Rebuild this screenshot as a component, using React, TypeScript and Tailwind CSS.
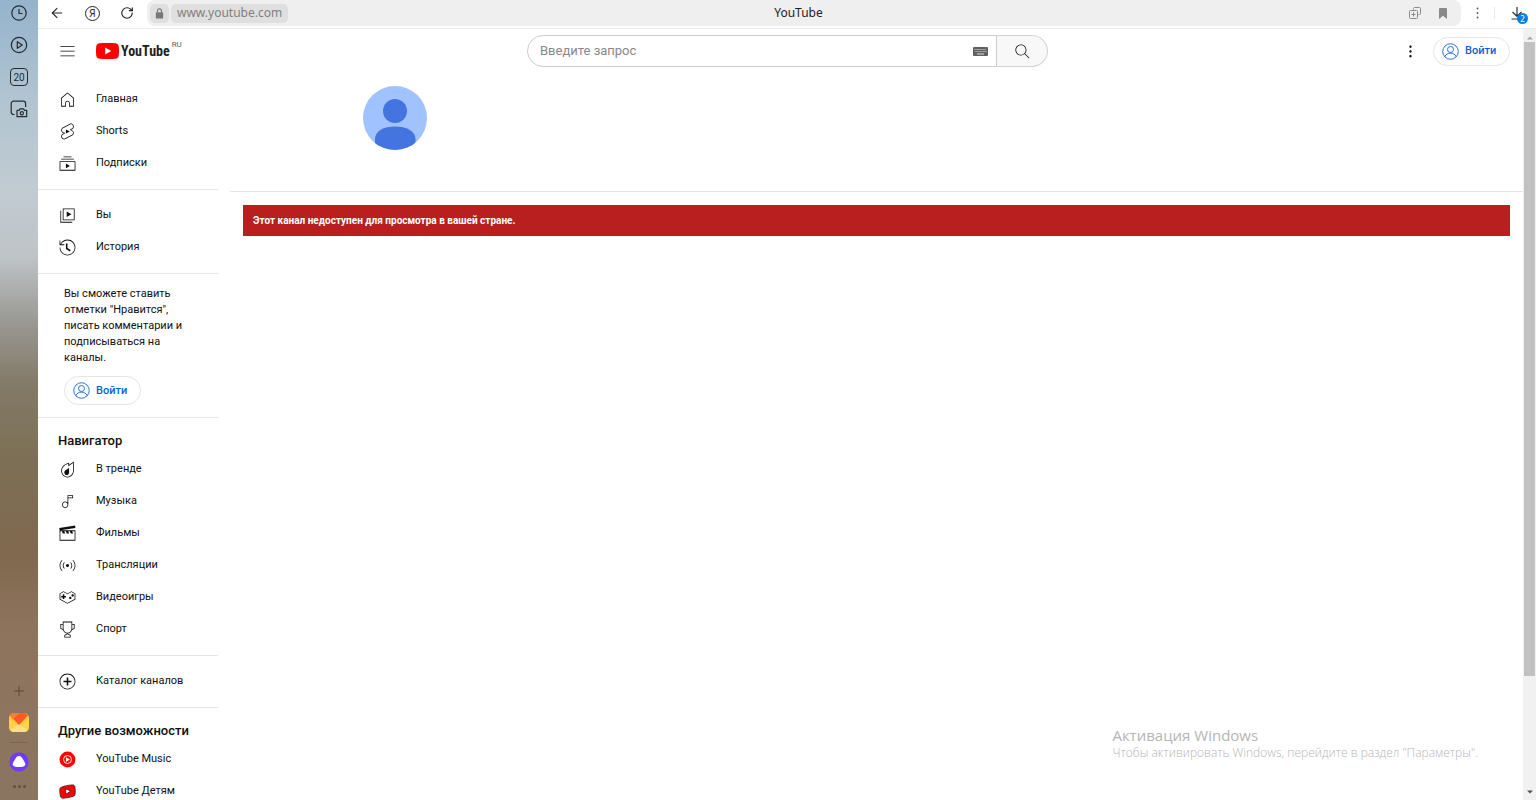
import type { ReactNode } from "react";
import { ArrowLeft, Plus, RotateCw } from "lucide-react";

const paths = {
  menu: "M21 6H3V5h18v1zm0 5H3v1h18v-1zm0 6H3v1h18v-1z",
  search:
    "m20.87 20.17-5.59-5.59C16.35 13.35 17 11.75 17 10c0-3.87-3.13-7-7-7s-7 3.13-7 7 3.13 7 7 7c1.75 0 3.35-.65 4.58-1.71l5.59 5.59.7-.71zM10 16c-3.31 0-6-2.69-6-6s2.69-6 6-6 6 2.69 6 6-2.69 6-6 6z",
  dots: "M12 16.5c.83 0 1.5.67 1.5 1.5s-.67 1.5-1.5 1.5-1.5-.67-1.5-1.5.67-1.5 1.5-1.5zM10.5 12c0 .83.67 1.5 1.5 1.5s1.5-.67 1.5-1.5-.67-1.5-1.5-1.5-1.5.67-1.5 1.5zm0-6c0 .83.67 1.5 1.5 1.5s1.5-.67 1.5-1.5-.67-1.5-1.5-1.5-1.5.67-1.5 1.5z",
  home: "m12 4.3-7 6V20h4v-3.5c0-1.65 1.35-3 3-3s3 1.35 3 3V20h4v-9.7l-7-6M12 3l8 6.8V21h-6v-4.5c0-1.1-.9-2-2-2s-2 .9-2 2V21H4V9.8L12 3z",
  shorts:
    "M10 14.65v-5.3L15 12l-5 2.65zm7.77-4.33-1.2-.5L18 9.06c1.84-.96 2.53-3.23 1.56-5.06s-3.24-2.53-5.07-1.56L6 6.94c-1.29.68-2.07 2.04-2 3.49.07 1.42.93 2.67 2.22 3.25.03.01 1.2.5 1.2.5L6 14.93c-1.83.97-2.53 3.24-1.56 5.07.97 1.83 3.24 2.53 5.07 1.56l8.5-4.5c1.29-.68 2.06-2.04 1.99-3.49-.07-1.42-.94-2.68-2.23-3.25zm-.23 5.86-8.5 4.5c-1.34.71-3.01.2-3.72-1.14-.71-1.34-.2-3.01 1.14-3.72l2.04-1.08v-1.21l-.69-.28-1.11-.46c-.99-.41-1.65-1.35-1.7-2.41-.05-1.06.52-2.06 1.46-2.56l8.5-4.5c1.34-.71 3.01-.2 3.72 1.14.71 1.34.2 3.01-1.14 3.72L15.5 9.26v1.21l1.8.74c.99.41 1.65 1.35 1.7 2.41.05 1.06-.52 2.06-1.46 2.56z",
  subs: "M10 18v-6l5 3-5 3zm7-15H7v1h10V3zm3 3H4v1h16V6zm2 3H2v12h20V9zM3 10h18v10H3V10z",
  you: "m11 7 6 3.5-6 3.5V7zm7 13H4V6H3v15h15v-1zm3-2H6V3h15v15zM7 17h13V4H7v13z",
  history:
    "M14.97 16.95 10 13.87V7h2v5.76l4.03 2.49-1.06 1.7zM22 12c0 5.51-4.49 10-10 10S2 17.51 2 12h1c0 4.96 4.04 9 9 9s9-4.04 9-9-4.04-9-9-9C8.81 3 5.92 4.64 4.28 7.38c-.11.18-.22.37-.31.56L3.94 8H8v1H1.96V3h1v4.74c.04-.09.07-.17.11-.25.11-.22.23-.42.35-.63C5.22 3.86 8.51 2 12 2c5.51 0 10 4.49 10 10z",
  trending:
    "M19 3.87v9.77C19 17.7 15.86 21 12 21s-7-3.3-7-7.37v-.13c0-1.06.22-2.13.62-3.09.5-1.19 1.29-2.21 2.27-2.97.85-.66 1.83-1.14 2.87-1.65.39-.19.77-.38 1.15-.58.36-.19.72-.38 1.08-.56v3.22l1.55-1.04L19 3.87M20 2l-6 4V3c-.85.44-1.7.88-2.55 1.33-1.41.74-2.9 1.34-4.17 2.32-1.13.87-2.02 2.05-2.58 3.37-.46 1.09-.7 2.29-.7 3.48v.14C4 18.26 7.58 22 12 22s8-3.74 8-8.36V2zM9.45 12.89 14 10v5.7c0 1.82-1.34 3.3-3 3.3s-3-1.47-3-3.3c0-1.19.58-2.23 1.45-2.81z",
  music:
    "M12 4v9.38c-.73-.84-1.8-1.38-3-1.38-2.21 0-4 1.79-4 4s1.79 4 4 4 4-1.79 4-4V8h6V4h-7zM9 19c-1.66 0-3-1.34-3-3s1.34-3 3-3 3 1.34 3 3-1.34 3-3 3zm9-12h-5V5h5v2z",
  movies:
    "m22.01 4.91-.5-2.96L1.64 5.19 2 8v13h20V8H3.06l18.95-3.09zM5 9l1 3h3L8 9h2l1 3h3l-1-3h2l1 3h3l-1-3h3v11H3V9h2z",
  live: "M14 12c0 1.1-.9 2-2 2s-2-.9-2-2 .9-2 2-2 2 .9 2 2zM8.48 8.45l-.71-.7C6.68 8.83 6 10.34 6 12s.68 3.17 1.77 4.25l.71-.71C7.57 14.64 7 13.39 7 12s.57-2.64 1.48-3.55zm7.75-.7-.71.71c.91.9 1.48 2.15 1.48 3.54s-.57 2.64-1.48 3.55l.71.71C17.32 15.17 18 13.66 18 12s-.68-3.17-1.77-4.25zM5.65 5.63l-.7-.71C3.13 6.73 2 9.24 2 12s1.13 5.27 2.95 7.08l.71-.71C4.02 16.74 3 14.49 3 12s1.02-4.74 2.65-6.37zm13.4-.71-.71.71C19.98 7.26 21 9.51 21 12s-1.02 4.74-2.65 6.37l.71.71C20.87 17.27 22 14.76 22 12s-1.13-5.27-2.95-7.08z",
  gaming:
    "M10 12H8v2H6v-2H4v-2h2V8h2v2h2v2zm7 .5c0-.83-.67-1.5-1.5-1.5s-1.5.67-1.5 1.5.67 1.5 1.5 1.5 1.5-.67 1.5-1.5zm3-3c0-.83-.67-1.5-1.5-1.5S17 8.67 17 9.5s.67 1.5 1.5 1.5 1.5-.67 1.5-1.5zm-3.03-4.35-4.5 2.53-.49.27-.49-.27-4.5-2.53L3 7.39v6.43l8.98 5.04 8.98-5.04V7.39l-3.99-2.24m0-1.15 4.99 2.8v7.6L11.98 20 2 14.4V6.8L6.99 4l4.99 2.8L16.97 4z",
  sports:
    "M18 5V2H6v3H3v6l3.23 1.61c.7 2.5 2.97 4.34 5.69 4.38L8 19v3h8v-3l-3.92-2.01c2.72-.04 4.99-1.88 5.69-4.38L21 11V5h-3zM6 11.38l-2-1V6h2v5.38zM15 21H9v-1.39l3-1.54 3 1.54V21zm2-10c0 2.76-2.24 5-5 5s-5-2.24-5-5V3h10v8zm3-.62-2 1V6h2v4.38z",
  channels:
    "M17 13h-4v4h-2v-4H7v-2h4V7h2v4h4v2zM12 3c-4.96 0-9 4.04-9 9s4.04 9 9 9 9-4.04 9-9-4.04-9-9-9m0-1c5.52 0 10 4.48 10 10s-4.48 10-10 10S2 17.52 2 12 6.48 2 12 2z",
};

function Icon({ name }: { name: keyof typeof paths }) {
  return (
    <svg viewBox="0 0 24 24" className="size-[19px] shrink-0" fill="currentColor" fillRule="evenodd">
      <path d={paths[name]} />
    </svg>
  );
}

function MusicLogo() {
  return (
    <svg viewBox="0 0 24 24" className="size-[19px] shrink-0">
      <circle cx="12" cy="12" r="10" fill="#f00" />
      <circle cx="12" cy="12" r="5" fill="none" stroke="#fff" strokeWidth="1.1" />
      <path d="m10 9 5 3-5 3z" fill="#fff" />
    </svg>
  );
}

function KidsLogo() {
  return (
    <svg viewBox="0 0 24 24" className="size-[19px] shrink-0">
      <path
        d="M4.5 6.5c4-1.6 9-2.6 13.5-2.8 1.7-.1 2.9.5 3.3 2.2.6 3 .7 6.5.3 9.6-.2 1.4-1.1 2.2-2.5 2.6-4 1.3-8.5 2.2-13 2.3-1.7 0-2.6-.8-3-2.4-.7-3-1-6-.8-8.8.1-1.4.8-2.2 2.2-2.7z"
        fill="#f00"
        stroke="#212121"
      />
      <path d="m9.5 8.5 6.5 3-6 4z" fill="#fff" stroke="#212121" />
    </svg>
  );
}

function NavItem({ icon, label }: { icon: ReactNode; label: string }) {
  return (
    <li>
      <a href="#" className="flex h-8 items-center gap-[19px] pl-5">
        {icon}
        <span>{label}</span>
      </a>
    </li>
  );
}

function SignIn() {
  return (
    <button className="flex h-[29px] w-[77px] items-center gap-[5px] rounded-full border border-[#e5e5e5] pl-[7px] text-[11px] font-medium text-[#065fd4]">
      <svg viewBox="0 0 24 24" className="size-[19px]" fill="none" stroke="currentColor" strokeWidth="1.1">
        <circle cx="12" cy="12" r="9.8" />
        <circle cx="12" cy="9.5" r="3.8" />
        <path d="M4.8 18.5c1.2-2.8 3.9-4.4 7.2-4.4s6 1.6 7.2 4.4" />
      </svg>
      Войти
    </button>
  );
}

function DesktopStrip() {
  return (
    <aside className="flex w-[38px] shrink-0 flex-col items-center bg-linear-[180deg,#94b3cc_0%,#b0c4d1_12%,#c1cbd2_24%,#bfc4c7_32%,#96958f_41%,#837a67_48%,#7d7056_57%,#7f684e_69%,#8f745d_79%,#8a7560_100%] pt-1 pb-3 text-[#262b30]">
      <div className="flex flex-col gap-3.5">
        <svg viewBox="0 0 18 18" className="size-[18px]" fill="none" stroke="currentColor" strokeWidth="1.2">
          <circle cx="9" cy="9" r="7.2" />
          <path d="M9 5v4.5h3.5" />
        </svg>
        <svg viewBox="0 0 18 18" className="size-[18px]" fill="none" stroke="currentColor" strokeWidth="1.2">
          <circle cx="9" cy="9" r="7.7" />
          <path d="M7.3 5.7v6.6L12.3 9z" strokeLinejoin="round" />
        </svg>
        <span className="flex size-[18px] items-center justify-center rounded-[4px] border border-current pt-px text-[10px]">
          20
        </span>
        <svg viewBox="0 0 18 18" className="size-[18px]" fill="none" stroke="currentColor" strokeWidth="1.2">
          <path d="M4.5 14.5h-1A2.3 2.3 0 0 1 1.2 12V3.5A2.3 2.3 0 0 1 3.5 1.2h9.8a2.3 2.3 0 0 1 2.3 2.3V7" />
          <path d="M7 10.3h2l1-1.5h3.5l1 1.5h2.2v6.3H7z" strokeLinejoin="round" />
          <circle cx="11.8" cy="13.2" r="1.6" />
        </svg>
      </div>
      <Plus className="mt-auto size-4 text-[#55483b]" strokeWidth={1.5} />
      <svg viewBox="0 0 20 20" className="mt-3.5 size-5">
        <rect width="20" height="19" rx="5" fill="#ffc83a" />
        <path d="M0 6 10 13l10-7v8a5 5 0 0 1-5 5H5a5 5 0 0 1-5-5z" fill="#ffd24a" />
        <path d="M1.5 17.5 10 10l8.5 7.5Q17 19 15 19H5q-2 0-3.5-1.5z" fill="#ffdf80" />
        <path d="M1 2.5Q2.5 0 5 0h10q2.5 0 4 2.5L10 12z" fill="#ff5a26" />
        <path d="M1 2.5Q2.5 0 5 0h6L4 6z" fill="#ff7a3c" />
      </svg>
      <hr className="mt-[9px] w-[18px] border-[#7a6450]" />
      <svg viewBox="0 0 20 20" className="mt-[9px] size-5">
        <circle cx="10" cy="10" r="9.7" fill="#6f3bff" />
        <path
          d="M10 4c1.500 0 2.500.8 3.500 2.500l2.200 3.700c1.300 2.300.6 3.700-1.200 4.200-1.400.4-2.900.6-4.500.6s-3.100-.2-4.500-.6c-1.800-.5-2.500-1.900-1.200-4.200l2.200-3.700C7.500 4.800 8.500 4 10 4z"
          fill="#fff"
        />
      </svg>
      <div className="mt-[13px] flex gap-0.5">
        <i className="size-[3px] rounded-full bg-[#5f5142]" />
        <i className="size-[3px] rounded-full bg-[#5f5142]" />
        <i className="size-[3px] rounded-full bg-[#5f5142]" />
      </div>
    </aside>
  );
}

function BrowserBar() {
  return (
    <div className="flex h-[29px] shrink-0 items-start border-b border-[#ececec] font-['Noto_Sans',sans-serif] text-[12px]">
      <div className="flex h-[26px] w-[109px] shrink-0 items-center justify-between pr-[13px] pl-[11px] text-[#222]">
        <button aria-label="Назад">
          <ArrowLeft className="size-4" strokeWidth={1.6} />
        </button>
        <button className="flex size-[15px] items-center justify-center rounded-full border border-[#222] text-[10px] leading-none">
          Я
        </button>
        <button aria-label="Обновить">
          <RotateCw className="size-[14px]" strokeWidth={2} />
        </button>
      </div>
      <div className="flex h-[26px] flex-1 items-center rounded-lg bg-[#efefef] pr-3.5 pl-[3px]">
        <div className="flex flex-1 gap-0.5">
          <span className="flex h-[19px] w-[19px] items-center justify-center rounded-[5px] bg-[#dfdfdf]">
            <svg viewBox="0 0 9 12" className="h-[11px] w-[9px]">
              <path d="M2.3 5V3.2a2.2 2.2 0 0 1 4.4 0V5" fill="none" stroke="#777" strokeWidth="1.2" />
              <rect x=".5" y="4.5" width="8" height="7" rx="1" fill="#777" />
            </svg>
          </span>
          <span className="flex h-[19px] items-center rounded-[5px] bg-[#dfdfdf] px-1.5 text-[#808080]">www.youtube.com</span>
        </div>
        <span className="text-[#222]">YouTube</span>
        <div className="flex flex-1 items-center justify-end gap-[18px] text-[#8a8a8a]">
          <svg viewBox="0 0 12 12" className="size-3" fill="none" stroke="currentColor">
            <path d="M4.5 2.5v-1a1 1 0 0 1 1-1h5a1 1 0 0 1 1 1v5a1 1 0 0 1-1 1h-1" />
            <rect x=".5" y="3.5" width="8" height="8" rx="1" />
            <path d="M4.5 5.5v4M2.5 7.5h4" />
          </svg>
          <svg viewBox="0 0 8 11" className="h-[11px] w-2" fill="currentColor">
            <path d="M0 1q0-1 1-1h6q1 0 1 1v10L4 7.8 0 11z" />
          </svg>
        </div>
      </div>
      <div className="flex h-[26px] w-[75px] shrink-0 items-center pl-[15px]">
        <svg viewBox="0 0 3 12" className="h-3 w-[3px]" fill="#555">
          <circle cx="1.5" cy="1.5" r=".9" />
          <circle cx="1.5" cy="6" r=".9" />
          <circle cx="1.5" cy="10.5" r=".9" />
        </svg>
        <span className="mr-[15px] ml-[15px] h-3 w-px bg-[#e8e8e8]" />
        <button className="relative" aria-label="Загрузки">
          <svg viewBox="0 0 14 14" className="size-3.5" fill="none" stroke="#333" strokeWidth="1.2">
            <path d="M7 1v9M2.5 6 7 10.3 11.5 6M1.5 13h11" />
          </svg>
          <span className="absolute top-[7px] left-[7px] flex size-[11px] items-center justify-center rounded-full bg-[#0a7de0] text-[8px] leading-none text-white">
            2
          </span>
        </button>
      </div>
    </div>
  );
}

function Header() {
  return (
    <header className="flex h-[45px] shrink-0 items-center justify-between pb-px">
      <div className="flex w-48 items-center gap-[19px] pl-5">
        <button aria-label="Меню">
          <Icon name="menu" />
        </button>
        <a href="#" className="flex items-center">
          <svg viewBox="0 0 23 16" className="h-4 w-[23px]">
            <path
              d="M22.5 2.5A2.9 2.9 0 0 0 20.5.5C18.7 0 11.5 0 11.5 0S4.3 0 2.5.5a2.9 2.9 0 0 0-2 2C0 4.3 0 8 0 8s0 3.7.5 5.5a2.9 2.9 0 0 0 2 2c1.8.5 9 .5 9 .5s7.2 0 9-.5a2.900 2.900 0 0 0 2-2C23 11.700 23 8 23 8s0-3.700-.5-5.500z"
              fill="#f00"
            />
            <path d="M9.2 4.6v6.8L15.2 8z" fill="#fff" />
          </svg>
          <span className="ml-0.5 font-['Liberation_Sans_Narrow','Roboto_Condensed',Roboto,sans-serif] text-[14px] font-bold text-[#212121]">
            YouTube
          </span>
          <sup className="-top-1.5 ml-0.5 text-[8px] text-[#606060]">RU</sup>
        </a>
      </div>
      <form className="flex h-8 w-[521px]">
        <label className="flex flex-1 items-center rounded-l-full border border-[#ccc] pr-2 pl-3">
          <input
            aria-label="Введите запрос"
            placeholder="Введите запрос"
            className="min-w-0 flex-1 text-[13px] outline-none placeholder:text-[#888]"
          />
          <svg viewBox="0 0 15 9" className="h-[9px] w-[15px]">
            <rect width="15" height="9" rx="1" fill="#606060" />
            <path d="M1.5 2.5h12M2.5 4.5h11" stroke="#ddd" strokeDasharray="1 1" />
            <path d="M4 7h7" stroke="#ddd" />
          </svg>
        </label>
        <button
          type="button"
          aria-label="Поиск"
          className="flex w-[51px] items-center justify-center rounded-r-full border border-l-0 border-[#d3d3d3] bg-[#f8f8f8]"
        >
          <Icon name="search" />
        </button>
      </form>
      <div className="flex w-[178px] items-center justify-end gap-[13px] pr-[13px]">
        <button aria-label="Настройки">
          <Icon name="dots" />
        </button>
        <SignIn />
      </div>
    </header>
  );
}

function Sidebar() {
  const section = "border-b border-[#e5e5e5] pt-[9px] pb-2.5";
  const heading = "h-[26px] pl-5 text-[13px] leading-7 font-medium";
  return (
    <nav className="w-[180px] shrink-0 text-[11px]">
      <ul className={section}>
        <NavItem icon={<Icon name="home" />} label="Главная" />
        <NavItem icon={<Icon name="shorts" />} label="Shorts" />
        <NavItem icon={<Icon name="subs" />} label="Подписки" />
      </ul>
      <ul className={section}>
        <NavItem icon={<Icon name="you" />} label="Вы" />
        <NavItem icon={<Icon name="history" />} label="История" />
      </ul>
      <div className="border-b border-[#e5e5e5] px-[26px] py-3 leading-4">
        <p className="mb-2.5">Вы сможете ставить отметки "Нравится", писать комментарии и подписываться на каналы.</p>
        <SignIn />
      </div>
      <div className={section}>
        <h3 className={heading}>Навигатор</h3>
        <ul>
          <NavItem icon={<Icon name="trending" />} label="В тренде" />
          <NavItem icon={<Icon name="music" />} label="Музыка" />
          <NavItem icon={<Icon name="movies" />} label="Фильмы" />
          <NavItem icon={<Icon name="live" />} label="Трансляции" />
          <NavItem icon={<Icon name="gaming" />} label="Видеоигры" />
          <NavItem icon={<Icon name="sports" />} label="Спорт" />
        </ul>
      </div>
      <ul className={section}>
        <NavItem icon={<Icon name="channels" />} label="Каталог каналов" />
      </ul>
      <div className={section}>
        <h3 className={heading}>Другие возможности</h3>
        <ul>
          <NavItem icon={<MusicLogo />} label="YouTube Music" />
          <NavItem icon={<KidsLogo />} label="YouTube Детям" />
        </ul>
      </div>
    </nav>
  );
}

function Channel() {
  return (
    <main className="ml-3 flex-1">
      <div className="border-b border-[#e5e5e5] px-[133px] pt-3 pb-[41px]">
        <svg viewBox="0 0 64 64" className="size-16">
          <clipPath id="avatar">
            <circle cx="32" cy="32" r="32" />
          </clipPath>
          <g clipPath="url(#avatar)">
            <rect width="64" height="64" fill="#a0c3ff" />
            <circle cx="32" cy="25" r="12" fill="#4374e0" />
            <path d="M12 64V53c0-8 9-12.5 20-12.5S52.5 45 52.5 53v11z" fill="#4374e0" />
          </g>
        </svg>
      </div>
      <p className="mx-[13px] mt-[13px] flex h-[31px] items-center bg-[#b91f1f] px-2.5 text-[10px] font-bold text-white">
        Этот канал недоступен для просмотра в вашей стране.
      </p>
    </main>
  );
}

function Scrollbar() {
  return (
    <div className="flex w-[13px] shrink-0 flex-col items-center bg-[#f1f1f1] pt-[5px] pb-1">
      <svg viewBox="0 0 6 8" className="h-2 w-1.5 shrink-0" fill="#a3a3a3">
        <path d="M0 5.5h6L3 2.5z" />
      </svg>
      <div className="flex w-full flex-1 justify-center">
        <div className="h-[85%] w-[11px] bg-[#c1c1c1]" />
      </div>
      <svg viewBox="0 0 6 8" className="h-2 w-1.5 shrink-0" fill="#505050">
        <path d="M0 2.5h6l-3 3z" />
      </svg>
    </div>
  );
}

function App() {
  return (
    <div className="relative flex h-screen overflow-hidden bg-white font-[Roboto,sans-serif] text-[#0f0f0f]">
      <DesktopStrip />
      <div className="flex min-w-0 flex-1 flex-col">
        <BrowserBar />
        <div className="flex min-h-0 flex-1">
          <div className="flex min-w-0 flex-1 flex-col">
            <Header />
            <div className="flex min-h-0 flex-1">
              <Sidebar />
              <Channel />
            </div>
          </div>
          <Scrollbar />
        </div>
      </div>
      <div className="absolute right-[58px] bottom-[37px] font-['Open_Sans',sans-serif] text-[#b5b5b5]">
        <p className="text-[15px] leading-4">Активация Windows</p>
        <p className="text-[12px] leading-5 font-light">Чтобы активировать Windows, перейдите в раздел "Параметры".</p>
      </div>
    </div>
  );
}

export default App;
